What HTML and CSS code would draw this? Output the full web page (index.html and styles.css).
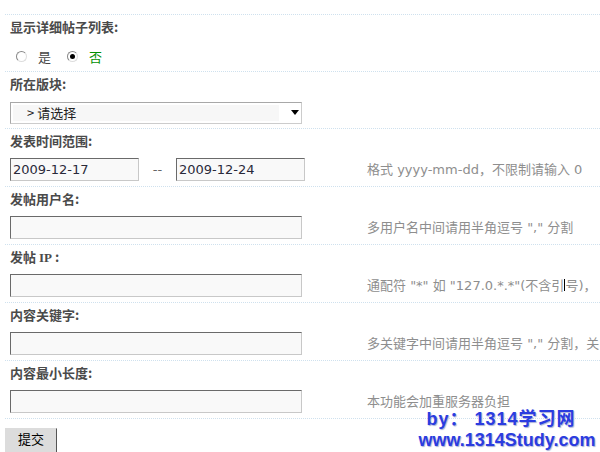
FILE: index.html
```html
<!DOCTYPE html>
<html lang="zh-CN">
<head>
    <meta charset="UTF-8">
    <title>帖子搜索</title>
    <link rel="stylesheet" href="styles.css">
</head>
<body>
    <form class="search-form">
        <div class="row tight">
            <div class="label">显示详细帖子列表:</div>
            <div class="field">
                <label class="radio"><span class="dot"></span>是</label>
                <label class="radio checked"><span class="dot"></span>否</label>
            </div>
        </div>
        <div class="row tight">
            <div class="label">所在版块:</div>
            <div class="field">
                <div class="select-box">
                    <span class="select-text">&gt; 请选择</span>
                    <span class="select-arrow"></span>
                </div>
            </div>
        </div>
        <div class="row">
            <div class="label">发表时间范围:</div>
            <div class="field">
                <div class="control">
                    <input class="text short" type="text" value="2009-12-17">
                    <span class="dash">--</span>
                    <input class="text short" type="text" value="2009-12-24">
                </div>
                <span class="hint">格式 yyyy-mm-dd，不限制请输入 0</span>
            </div>
        </div>
        <div class="row">
            <div class="label">发帖用户名:</div>
            <div class="field">
                <div class="control"><input class="text" type="text"></div>
                <span class="hint">多用户名中间请用半角逗号 "," 分割</span>
            </div>
        </div>
        <div class="row">
            <div class="label">发帖 <span class="latin">IP</span> :</div>
            <div class="field">
                <div class="control"><input class="text" type="text"></div>
                <span class="hint">通配符 "*" 如 "127.0.*.*"(不含引<span class="caret"></span>号)，</span>
            </div>
        </div>
        <div class="row">
            <div class="label">内容关键字:</div>
            <div class="field">
                <div class="control"><input class="text" type="text"></div>
                <span class="hint">多关键字中间请用半角逗号 "," 分割，关</span>
            </div>
        </div>
        <div class="row last">
            <div class="label">内容最小长度:</div>
            <div class="field">
                <div class="control"><input class="text" type="text"></div>
                <span class="hint">本功能会加重服务器负担</span>
            </div>
        </div>
        <div class="actions">
            <button type="button" class="btn">提交</button>
        </div>
    </form>

    <div class="watermark">
        <div class="wm-line">by： 1314学习网</div>
        <div class="wm-line">www.1314Study.com</div>
    </div>
</body>
</html>
```

FILE: styles.css
```css
/* General */
body {
    margin: 0;
    background: #fff;
    font-family: "DejaVu Sans", "Noto Sans CJK SC", sans-serif;
    font-size: 13px;
    color: #333;
    overflow: hidden;
    height: 452px;
    position: relative;
}

.search-form {
    padding-top: 14px;
    padding-left: 5px;
}

/* Rows */
.row {
    border-top: 1px dotted #cfe1ee;
    padding: 2px 0 5px 5px;
}

.row.tight {
    padding-bottom: 4px;
}

.row.last {
    border-bottom: 1px dotted #cfe1ee;
}

.label {
    height: 20px;
    line-height: 20px;
    font-family: "Noto Sans CJK SC", sans-serif;
    font-weight: bold;
    color: #4a4a4a;
}

.label .latin {
    font-family: "Liberation Serif", serif;
}

.field {
    display: flex;
    align-items: center;
    height: 23px;
    margin-top: 7px;
    white-space: nowrap;
}

.control {
    width: 357px;
    flex: none;
    display: flex;
    align-items: center;
}

/* Radios */
.radio {
    display: flex;
    align-items: center;
    margin-left: 6px;
    margin-right: 16px;
    margin-top: 1px;
    color: #444;
    font-family: "Noto Sans CJK SC", sans-serif;
}

.radio .dot {
    width: 9px;
    height: 9px;
    border: 1px solid #888;
    border-right-color: #ddd;
    border-bottom-color: #ddd;
    border-radius: 50%;
    background: #fff;
    margin-right: 11px;
    position: relative;
}

.radio.checked {
    color: #009000;
    margin-left: 0;
}

.radio.checked .dot::after {
    content: "";
    position: absolute;
    left: 2px;
    top: 2px;
    width: 5px;
    height: 5px;
    border-radius: 50%;
    background: #000;
}

/* Select */
.select-box {
    width: 290px;
    height: 20px;
    border: 1px solid #a8a8a8;
    border-right-color: #ccc;
    border-bottom-color: #ccc;
    background: #fff;
    display: flex;
    align-items: center;
}

.select-text {
    width: 266px;
    height: 16px;
    line-height: 16px;
    margin-left: 2px;
    padding-left: 14px;
    background: #f7f7f7;
    color: #222;
    box-sizing: border-box;
    font-family: "Noto Sans CJK SC", sans-serif;
}

.select-arrow {
    margin-left: 12px;
    width: 0;
    height: 0;
    border-left: 4px solid transparent;
    border-right: 4px solid transparent;
    border-top: 5px solid #000;
}

/* Inputs */
.text {
    width: 292px;
    height: 23px;
    box-sizing: border-box;
    margin: 0;
    padding: 0 2px;
    border: 1px solid #c8c8c8;
    border-top-color: #6a6a6a;
    border-left-color: #6a6a6a;
    background: #f9f9f9;
    font-family: "DejaVu Sans", sans-serif;
    font-size: 13px;
    color: #2a2a3a;
}

.text.short {
    width: 129px;
}

.dash {
    width: 37px;
    text-align: center;
    color: #666;
}

.hint {
    color: #8e8e8e;
    padding-bottom: 2px;
}

.caret {
    display: inline-block;
    width: 1px;
    height: 12px;
    background: #000;
    vertical-align: -1px;
}

/* Submit */
.actions {
    padding-top: 9px;
}

.btn {
    width: 52px;
    height: 26px;
    margin: 0;
    padding: 0 0 6px;
    border: 1px solid #dcdcdc;
    border-right-color: #555;
    background: #dcdcdc;
    font-family: "Noto Sans CJK SC", sans-serif;
    font-size: 13px;
    color: #000;
}

/* Watermark */
.watermark {
    position: absolute;
    left: 414px;
    top: 409px;
    width: 186px;
    text-align: center;
    font-family: "Liberation Sans", "Noto Sans CJK SC", sans-serif;
    font-weight: bold;
    font-size: 18px;
    line-height: 21px;
    color: #2b3ce0;
    text-shadow: 1px 1px 1px #a9b0d8;
}

.wm-line:first-child {
    padding-right: 12px;
    letter-spacing: 1px;
}
```
